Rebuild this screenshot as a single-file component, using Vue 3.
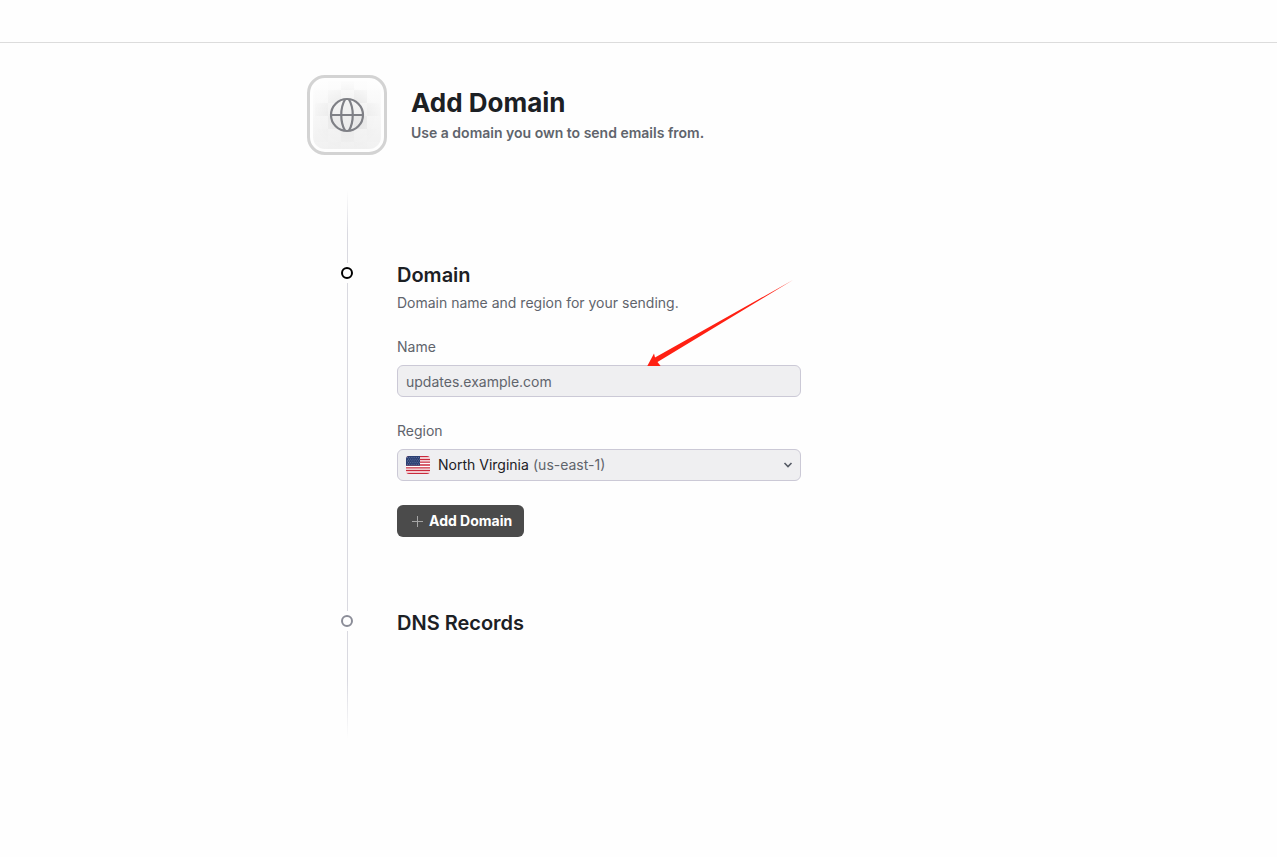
<script setup>
import { ref } from 'vue'

const name = ref('')
const region = ref('us-east-1')
const regions = [
  { code: 'us-east-1', label: 'North Virginia' },
  { code: 'eu-west-1', label: 'Ireland' },
  { code: 'sa-east-1', label: 'São Paulo' },
  { code: 'ap-northeast-1', label: 'Tokyo' },
]
const tiles = [
  [1, 0, 1], [2, 0, 4], [3, 0, 1],
  [0, 1, 1], [1, 1, 4], [2, 1, 2], [3, 1, 5], [4, 1, 1],
  [0, 2, 4], [1, 2, 2], [2, 2, 3], [3, 2, 2], [4, 2, 4],
  [0, 3, 1], [1, 3, 4], [2, 3, 3], [3, 3, 5], [4, 3, 1],
  [0, 4, 2], [1, 4, 1], [2, 4, 3], [3, 4, 1], [4, 4, 2],
  [1, 5, 2], [2, 5, 1], [3, 5, 2],
]
</script>

<template>
  <div class="page">
    <header class="topbar"></header>
    <main class="content">
      <div class="intro">
        <div class="badge">
          <svg class="badge-art" viewBox="0 0 68 68" aria-hidden="true">
            <defs>
              <linearGradient id="fade" x1="0" y1="0" x2="0" y2="1">
                <stop offset="0" stop-color="#fefefe" />
                <stop offset="1" stop-color="#f1f1f1" />
              </linearGradient>
              <radialGradient id="edge">
                <stop offset="0.5" stop-color="#fff" />
                <stop offset="1" stop-color="#fff" stop-opacity="0.2" />
              </radialGradient>
              <mask id="soft"><rect width="68" height="68" fill="url(#edge)" /></mask>
            </defs>
            <rect width="68" height="68" fill="url(#fade)" />
            <g mask="url(#soft)">
              <rect
                v-for="([x, y, tone], i) in tiles"
                :key="i"
                :x="x * 13 + 2"
                :y="y * 13 - 4"
                width="13"
                height="13"
                fill="#000"
                :fill-opacity="tone * 0.011"
              />
            </g>
            <g fill="none" stroke="#7f8086" stroke-width="2.2">
              <circle cx="34" cy="34" r="16" />
              <path d="M32 18.500C27 27 27 41 32 49.500M36 18.500C41 27 41 41 36 49.500M18 34H50" />
            </g>
          </svg>
        </div>
        <div class="intro-text">
          <h1>Add Domain</h1>
          <p>Use a domain you own to send emails from.</p>
        </div>
      </div>

      <ol class="steps">
        <li class="step first">
          <div class="rail">
            <span class="line lead"></span>
            <span class="dot active"></span>
            <span class="line grow"></span>
          </div>
          <section class="body">
            <h2>Domain</h2>
            <p class="hint">Domain name and region for your sending.</p>
            <form @submit.prevent>
              <div class="field">
                <label for="name">Name</label>
                <input id="name" v-model="name" class="control" type="text" placeholder="updates.example.com" />
                <svg class="arrow" viewBox="0 0 148 86" aria-hidden="true">
                  <path d="M146 0L8 77.500L7 73.500L0 86.500L14 86.500L10.500 82Z" fill="#ff2013" />
                </svg>
              </div>
              <div class="field">
                <label for="region">Region</label>
                <div class="select-box">
                  <select id="region" v-model="region" class="control">
                    <option v-for="r in regions" :key="r.code" :value="r.code">{{ r.label }}</option>
                  </select>
                  <svg class="flag" viewBox="0 0 24 18" aria-hidden="true">
                    <defs><clipPath id="flag-clip"><rect width="24" height="18" rx="3" /></clipPath></defs>
                    <g clip-path="url(#flag-clip)">
                      <rect width="24" height="18" fill="#fff" />
                      <path
                        d="M0 .7H24M0 3.5H24M0 6.2H24M0 9H24M0 11.8H24M0 14.5H24M0 17.3H24"
                        stroke="#c92a3c"
                        stroke-width="1.3"
                      />
                      <rect width="14" height="9.7" fill="#2b3f73" />
                      <path
                        d="M1 1.5H14M2 3.2H14M1 4.9H14M2 6.6H14M1 8.3H14"
                        stroke="#6f7fa8"
                        stroke-width=".8"
                        stroke-dasharray="1 1.2"
                      />
                    </g>
                  </svg>
                  <span class="code">({{ region }})</span>
                  <svg class="chevron" viewBox="0 0 10 6" aria-hidden="true">
                    <path d="M1.5 1L5 4.5L8.500 1" fill="none" stroke="#565b65" stroke-width="1.6" />
                  </svg>
                </div>
              </div>
              <button class="submit" type="submit">
                <svg viewBox="0 0 12 12" aria-hidden="true">
                  <path d="M5.500 1V12M0 6.500H11" stroke="#a5a5a5" stroke-width="1" fill="none" />
                </svg>
                Add Domain
              </button>
            </form>
          </section>
        </li>
        <li class="step">
          <div class="rail">
            <span class="dot"></span>
            <span class="line tail"></span>
          </div>
          <section class="body">
            <h2>DNS Records</h2>
          </section>
        </li>
      </ol>
    </main>
  </div>
</template>

<style>
body {
  margin: 0;
  background: #fefefe;
}
</style>

<style scoped>
.page {
  font-family: Inter, "Liberation Sans", sans-serif;
  font-size: 14px;
  line-height: 20px;
  color: #1c2024;
}
.topbar {
  height: 42px;
  border-bottom: 1px solid #dcdcdc;
}
.content {
  max-width: 663px;
  margin: 0 auto;
  padding: 32px 0;
}
.intro {
  display: flex;
  align-items: center;
  gap: 24px;
}
.badge {
  box-sizing: border-box;
  width: 80px;
  height: 80px;
  padding: 3px;
  border: 3px solid #d3d3d3;
  border-radius: 18px;
}
.badge-art {
  display: block;
  border-radius: 12px;
}
h1,
h2,
p {
  margin: 0;
}
h1 {
  padding-bottom: 4px;
  font-size: 26px;
  line-height: 32px;
  font-weight: 700;
}
.intro-text p {
  font-weight: 600;
  color: #60646c;
}
.steps {
  list-style: none;
  margin: 35px 0 0;
  padding: 0;
}
.step {
  display: flex;
  gap: 10px;
}
.rail {
  display: flex;
  flex-direction: column;
  align-items: center;
  width: 80px;
  flex: none;
}
.line {
  width: 1px;
  margin-left: 1px;
  background: #d9d9e0;
}
.lead {
  height: 73px;
  background: linear-gradient(to top, #d9d9e0 40%, transparent);
}
.grow {
  flex: 1;
}
.tail {
  height: 108px;
  background: linear-gradient(to bottom, #d9d9e0 45%, transparent);
}
.dot {
  box-sizing: border-box;
  width: 12px;
  height: 12px;
  margin: 4px 0;
  border: 2px solid #8b8d98;
  border-radius: 50%;
}
.dot.active {
  border-color: #000;
}
.body {
  flex: 1;
  max-width: 404px;
}
.first .body {
  padding: 73px 0 74px;
}
h2 {
  font-size: 20px;
  line-height: 24px;
  font-weight: 600;
}
.hint {
  margin-top: 6px;
  color: #60646c;
}
form {
  display: flex;
  flex-direction: column;
  align-items: flex-start;
  gap: 24px;
  margin-top: 24px;
}
.field {
  position: relative;
  display: flex;
  flex-direction: column;
  gap: 8px;
  width: 100%;
}
label {
  color: #60646c;
}
.control {
  box-sizing: border-box;
  width: 100%;
  height: 32px;
  margin: 0;
  padding: 0 8px;
  border: 1px solid #cbc9d6;
  border-radius: 6px;
  background: #efeff1;
  font: inherit;
  color: #1c2024;
}
.control::placeholder {
  color: #60646c;
  opacity: 1;
}
.arrow {
  position: absolute;
  left: 250px;
  bottom: 31px;
  width: 148px;
  height: 86px;
  pointer-events: none;
}
.select-box {
  position: relative;
}
select.control {
  display: block;
  appearance: none;
  padding-left: 40px;
}
.flag,
.code,
.chevron {
  position: absolute;
  pointer-events: none;
}
.flag {
  left: 9px;
  top: 7px;
  width: 24px;
  height: 18px;
}
.code {
  left: 136px;
  top: 6px;
  color: #60646c;
}
.chevron {
  right: 8px;
  top: 13px;
  width: 10px;
  height: 6px;
}
.submit {
  display: flex;
  align-items: center;
  gap: 5px;
  height: 32px;
  padding: 0 12px 0 15px;
  border: 0;
  border-radius: 6px;
  background: #4b4b4b;
  color: #fff;
  font: inherit;
  font-weight: 700;
}
.submit svg {
  width: 12px;
  height: 12px;
}
</style>
